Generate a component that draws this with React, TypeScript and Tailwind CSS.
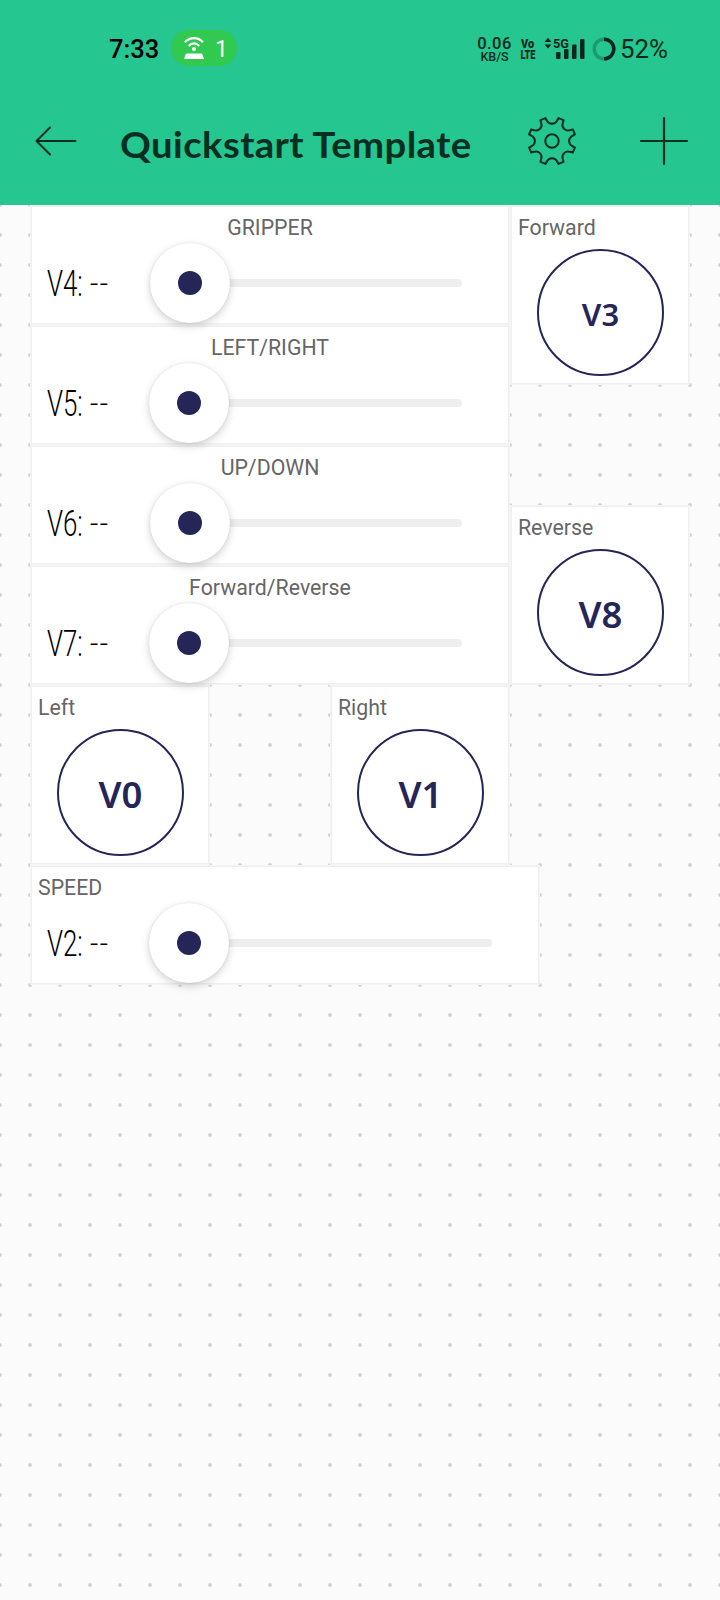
import type { ReactNode } from 'react';

function polar(deg: number, r: number) {
  const t = (deg * Math.PI) / 180;
  return `${(25 + r * Math.sin(t)).toFixed(2)} ${(25 - r * Math.cos(t)).toFixed(2)}`;
}

const gearPath =
  Array.from({ length: 8 }, (_, i) => {
    const a = i * 45;
    return `${i === 0 ? 'M' : 'L'}${polar(a - 16, 23.8)}L${polar(a - 14, 21)}A5.6 5.6 0 0 0 ${polar(a + 14, 21)}L${polar(a + 16, 23.8)}`;
  }).join('') + 'Z';

function StatusBar() {
  return (
    <div className="flex h-[96px] items-center pl-[109px] text-[#04291c]">
      <span className="w-[62px] pt-[3px] text-[25.5px] leading-none font-medium text-black">7:33</span>
      <div className="flex h-[36px] w-[66px] items-center gap-[10px] rounded-full bg-[#31c950] pl-[12px] text-white">
        <svg width="22" height="22" viewBox="0 0 22 22" fill="none" stroke="currentColor" strokeWidth="2.200">
          <path d="M2 5.200C7 -.2 15 -.2 20 5.200M5.800 9C9 5.600 13 5.600 16.200 9" />
          <circle cx="11" cy="12" r="2" fill="currentColor" stroke="none" />
          <path d="M3 16.500h16l2 5.500H1z" fill="currentColor" stroke="none" />
        </svg>
        <span className="pt-[2px] text-[23px] leading-none">1</span>
      </div>
      <div className="ml-[240px] flex w-[35px] flex-col items-center pt-[4px] leading-none font-medium">
        <span className="text-[16.5px] leading-[13px] tracking-[0.5px]">0.06</span>
        <span className="text-[12.5px] leading-[13px]">KB/S</span>
      </div>
      <svg className="mt-px ml-[8px] overflow-visible font-black" width="16" height="24" viewBox="0 0 16 24" fill="currentColor">
        <text x="1" y="11" fontSize="13" textLength="13" lengthAdjust="spacingAndGlyphs">Vo</text>
        <text x="0.500" y="21.500" fontSize="13" textLength="15" lengthAdjust="spacingAndGlyphs">LTE</text>
      </svg>
      <svg className="mt-px ml-[8px] overflow-visible" width="42" height="24" viewBox="0 0 42 24" fill="currentColor">
        <path d="M.5 5 4 .8 7.500 5zM.5 7.500 4 11.500 7.500 7.500z" />
        <text x="9" y="10.500" fontSize="13.500" fontWeight="700" textLength="16" lengthAdjust="spacingAndGlyphs">5G</text>
        <rect x="12" y="15" width="4.500" height="7" rx="1" />
        <rect x="20" y="12" width="4.500" height="10" rx="1" />
        <rect x="28" y="7.500" width="4.500" height="14.500" rx="1" />
        <rect x="36" y="2" width="4.500" height="20" rx="1" />
      </svg>
      <svg className="mt-px ml-[6px]" width="24" height="24" viewBox="0 0 24 24" fill="none" strokeWidth="3.400">
        <circle cx="12" cy="12" r="9.800" stroke="#1b9a70" />
        <path d="M12 2.200a9.800 9.800 0 0 1 0 19.600" stroke="#04291c" />
      </svg>
      <span className="ml-[4px] pt-[4px] text-[25.800px] leading-none">52%</span>
    </div>
  );
}

function TitleBar() {
  return (
    <div className="flex h-[90px] items-center pl-[35px] text-[#062e21]">
      <svg width="42" height="30" viewBox="0 0 42 30" fill="none" stroke="currentColor" strokeWidth="2" strokeLinecap="round" strokeLinejoin="round">
        <path d="M40.500 15H1.500M15 1.500 1.500 15 15 28.500" />
      </svg>
      <h1 className="ml-[43px] w-[407px] origin-left scale-x-[1.062] pt-[5px] font-[Lato] text-[36px] leading-[44px] font-bold tracking-[0.4px] whitespace-nowrap">
        Quickstart Template
      </h1>
      <svg width="50" height="50" viewBox="0 0 50 50" fill="none" stroke="currentColor" strokeWidth="2" strokeLinejoin="round">
        <path d={gearPath} />
        <circle cx="25" cy="25" r="6.700" />
      </svg>
      <svg className="ml-[62px]" width="50" height="50" viewBox="0 0 50 50" stroke="currentColor" strokeWidth="2.200" strokeLinecap="round">
        <path d="M25 2v46M2 25h46" />
      </svg>
    </div>
  );
}

function Card({ place, children }: { place: string; children: ReactNode }) {
  return (
    <section className={`m-[2px] flex min-w-0 flex-col bg-white shadow-[0_0_0_1px_#f0f0f0,0_0_0_2px_#f4f4f4] ${place}`}>
      {children}
    </section>
  );
}

type SliderProps = { place: string; title: string; pin: string; align?: string; valueWidth: string };

function SliderCard({ place, title, pin, align = 'text-center', valueWidth }: SliderProps) {
  return (
    <Card place={place}>
      <h2 className={`h-[36px] px-[6px] pt-[8px] text-[21.300px] leading-[26px] text-[#666] ${align}`}>{title}</h2>
      <div className="flex h-[80px] items-center pr-[46px] pl-[15px]">
        <div className={`flex items-center ${valueWidth}`}>
          <span className="w-[43px] origin-left scale-x-[.7] text-[37px] leading-none font-light whitespace-nowrap text-black">
            {pin}:
          </span>
          <span className="origin-left pt-[2px] text-[29px] leading-none font-light tracking-[1.500px] text-black">--</span>
        </div>
        <div className="z-10 flex size-[80px] shrink-0 items-center justify-center rounded-full bg-white shadow-[0_3px_9px_rgba(0,0,0,0.18),0_0_2px_rgba(0,0,0,0.1)]">
          <div className="size-[24px] rounded-full bg-[#252657]" />
        </div>
        <div className="-ml-[6px] h-[8px] flex-1 rounded-r-full bg-[#eee]" />
      </div>
    </Card>
  );
}

function ButtonCard({ place, title, pin, size = 'text-[36.5px]' }: { place: string; title: string; pin: string; size?: string }) {
  return (
    <Card place={place}>
      <h2 className="h-[42px] px-[6px] pt-[8px] text-[21.300px] leading-[26px] text-[#666]">{title}</h2>
      <button
        className={`ml-[25px] flex size-[127px] items-center justify-center rounded-full border-2 border-[#252657] pt-[4px] font-['Noto_Sans'] leading-none font-semibold text-[#252657] ${size}`}
      >
        {pin}
      </button>
    </Card>
  );
}

export default function App() {
  return (
    <div className="flex h-[1600px] w-[720px] flex-col overflow-hidden bg-[#fbfbfb] font-[Roboto,sans-serif]">
      <header className="z-10 h-[205px] shrink-0 bg-[#25c68f]">
        <StatusBar />
        <TitleBar />
      </header>
      <main className="grid flex-1 auto-rows-[30px] grid-cols-[repeat(22,30px)] bg-[radial-gradient(circle,#d0d0d0_1.3px,transparent_2.4px)] bg-size-[30px_30px] bg-position-[-15px_-15px] pl-[30px]">
        <SliderCard place="col-start-1 col-span-16 row-start-1 row-span-4" title="GRIPPER" pin="V4" valueWidth="w-[103px]" />
        <SliderCard place="col-start-1 col-span-16 row-start-5 row-span-4" title="LEFT/RIGHT" pin="V5" valueWidth="w-[102px]" />
        <SliderCard place="col-start-1 col-span-16 row-start-9 row-span-4" title="UP/DOWN" pin="V6" valueWidth="w-[103px]" />
        <SliderCard place="col-start-1 col-span-16 row-start-13 row-span-4" title="Forward/Reverse" pin="V7" valueWidth="w-[101.5px]" />
        <ButtonCard place="col-start-17 col-span-6 row-start-1 row-span-6" title="Forward" pin="V3" size="text-[31px]" />
        <ButtonCard place="col-start-17 col-span-6 row-start-11 row-span-6" title="Reverse" pin="V8" />
        <ButtonCard place="col-start-1 col-span-6 row-start-17 row-span-6" title="Left" pin="V0" />
        <ButtonCard place="col-start-11 col-span-6 row-start-17 row-span-6" title="Right" pin="V1" />
        <SliderCard place="col-start-1 col-span-17 row-start-23 row-span-4" title="SPEED" pin="V2" align="text-left" valueWidth="w-[101.5px]" />
      </main>
    </div>
  );
}
